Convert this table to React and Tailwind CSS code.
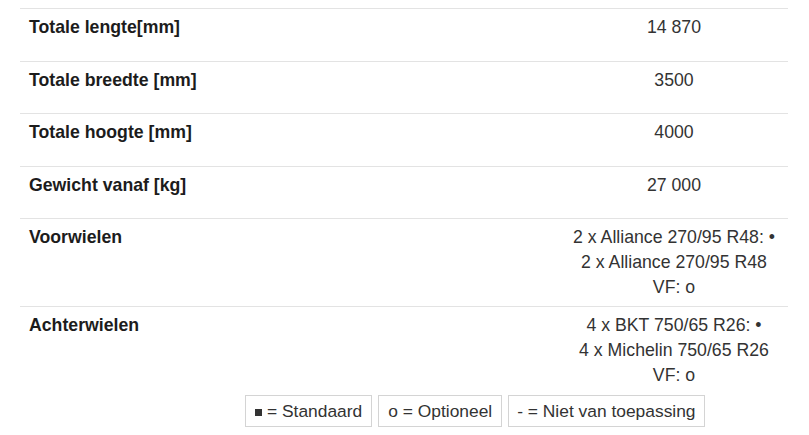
import React from "react";

const rows = [
  { label: "Totale lengte[mm]", value: ["14 870"] },
  { label: "Totale breedte [mm]", value: ["3500"] },
  { label: "Totale hoogte [mm]", value: ["4000"] },
  { label: "Gewicht vanaf [kg]", value: ["27 000"] },
  {
    label: "Voorwielen",
    value: ["2 x Alliance 270/95 R48: •", "2 x Alliance 270/95 R48", "VF: o"],
  },
  {
    label: "Achterwielen",
    value: ["4 x BKT 750/65 R26: •", "4 x Michelin 750/65 R26", "VF: o"],
  },
];

const SpecRow = ({ label, value }) => (
  <div className="grid grid-cols-[1fr_228px] min-h-[52.5px] pt-[6px] pb-[6px] border-t border-[#e3e3e3]">
    <div className="pl-[9px] font-bold text-[#1c1c1c]">{label}</div>
    <div className="text-center text-[#333]">
      {value.map((line) => (
        <div key={line}>{line}</div>
      ))}
    </div>
  </div>
);

export default function App() {
  return (
    <div
      className="w-[809px] h-[435px] bg-white overflow-hidden pt-[8px] text-[17.7px] leading-[25px]"
      style={{ fontFamily: '"Liberation Sans", Arial, sans-serif' }}
    >
      <div className="ml-[20px] w-[768px]">
        {rows.map((r) => (
          <SpecRow key={r.label} {...r} />
        ))}
      </div>

      {/* Legend */}
      <div className="flex gap-[6px] ml-[245px] mt-[1px] text-[17.4px] text-[#333]">
        <div className="flex items-center h-[32px] px-[9px] border border-[#d4d4d4]">
          <span className="inline-block w-[7px] h-[7px] bg-[#333] mr-[5px] mt-[3px]" />
          = Standaard
        </div>
        <div className="flex items-center h-[32px] px-[9px] border border-[#d4d4d4]">
          o = Optioneel
        </div>
        <div className="flex items-center h-[32px] px-[8px] border border-[#d4d4d4]">
          - = Niet van toepassing
        </div>
      </div>
    </div>
  );
}
